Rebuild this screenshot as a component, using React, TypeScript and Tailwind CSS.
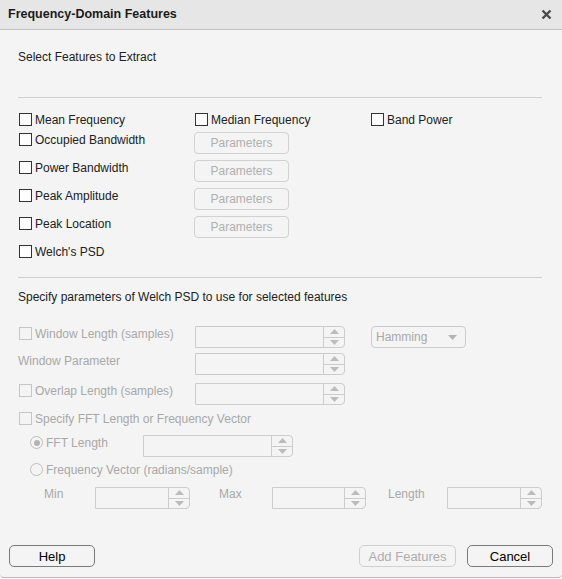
import React from "react";

//small square checkbox, dark when enabled, light grey when disabled
function Box({ disabled = false }: { disabled?: boolean }) {
  return (
    <span
      className={
        "mt-[1px] inline-block w-[13px] h-[13px] shrink-0 border " +
        (disabled ? "border-[#c6c6c6] bg-[#f4f4f4]" : "border-[#333333] bg-white")
      }
    />
  );
}

//checkbox + label
function Check({ label, disabled = false }: { label: string; disabled?: boolean }) {
  return (
    <div className="flex items-start gap-[3px] pl-[1px]">
      <Box disabled={disabled} />
      <span className={"pt-[1px] leading-[15px] whitespace-nowrap " + (disabled ? "text-[#a8a8a8]" : "text-[#212121]")}>
        {label}
      </span>
    </div>
  );
}

//radio button + label (always disabled here)
function Radio({ label, on = false }: { label: string; on?: boolean }) {
  return (
    <div className="flex items-start gap-[3px]">
      <span className="mt-[1px] flex items-center justify-center w-[13px] h-[13px] rounded-full border border-[#bdbdbd] bg-[#f4f4f4]">
        {on && <span className="w-[6px] h-[6px] rounded-full bg-[#b3b3b3]" />}
      </span>
      <span className="pt-[1px] leading-[15px] whitespace-nowrap text-[#a8a8a8]">{label}</span>
    </div>
  );
}

//disabled "Parameters" button
function ParamsBtn() {
  return (
    <div className="w-[95px] h-[22px] flex items-center justify-center rounded-[4px] border border-[#d2d2d2] text-[#b0b0b0]">
      Parameters
    </div>
  );
}

//disabled numeric spinner with up/down arrows
function Spinner({ w }: { w: string }) {
  return (
    <div className={"flex h-[22px] border border-[#cccccc] rounded-r-[4px] bg-[#f4f4f4] " + w}>
      <div className="flex-1" />
      <div className="w-[21px] flex flex-col border-l border-[#cccccc]">
        <div className="flex-1 flex items-center justify-center border-b border-[#cccccc]">
          <svg width="9" height="5" viewBox="0 0 9 5">
            <path d="M0 5 L4.5 0 L9 5 Z" fill="#bcbcbc" />
          </svg>
        </div>
        <div className="flex-1 flex items-center justify-center">
          <svg width="9" height="5" viewBox="0 0 9 5">
            <path d="M0 0 L4.5 5 L9 0 Z" fill="#bcbcbc" />
          </svg>
        </div>
      </div>
    </div>
  );
}

export default function App() {
  return (
    <div className="w-[562px] h-[579px] bg-white font-['Liberation_Sans',Arial,sans-serif] text-[12px]">
      <div className="h-[578px] flex flex-col bg-[#f4f4f4] border-b border-[#b8b8b8] rounded-b-[4px] overflow-hidden">
        {/* title bar */}
        <div className="h-[30px] shrink-0 flex items-center justify-between pl-[8px] pr-[10px] bg-[#e6e6e6] border-b border-[#c4c4c4]">
          <span className="font-bold text-[12.5px] text-[#1b1b1b]">Frequency-Domain Features</span>
          <svg width="11" height="11" viewBox="0 0 11 11">
            <path d="M1.5 1.5 L9.5 9.5 M9.5 1.5 L1.5 9.5" stroke="#4a4a4a" strokeWidth="2.4" />
          </svg>
        </div>

        {/* body */}
        <div className="flex-1 flex flex-col pl-[18px] pr-[20px]">
          <div className="mt-[20px] leading-[15px] text-[#212121]">Select Features to Extract</div>
          <div className="mt-[32px] border-t border-[#d0d0d0]" />

          {/* feature checkboxes */}
          <div className="mt-[14px] flex flex-col">
            <div className="h-[20px] flex">
              <div className="w-[176px]"><Check label="Mean Frequency" /></div>
              <div className="w-[176px]"><Check label="Median Frequency" /></div>
              <div><Check label="Band Power" /></div>
            </div>
            {["Occupied Bandwidth", "Power Bandwidth", "Peak Amplitude", "Peak Location"].map((l) => (
              <div key={l} className="h-[28px] flex">
                <div className="w-[176px]"><Check label={l} /></div>
                <ParamsBtn />
              </div>
            ))}
            <div className="h-[16px] flex">
              <Check label="Welch's PSD" />
            </div>
          </div>

          <div className="mt-[17px] border-t border-[#d0d0d0]" />
          <div className="mt-[12px] leading-[15px] text-[#212121]">
            Specify parameters of Welch PSD to use for selected features
          </div>

          {/* welch psd parameters */}
          <div className="mt-[21px] flex flex-col">
            <div className="h-[27px] flex items-start">
              <div className="w-[177px]"><Check label="Window Length (samples)" disabled /></div>
              <Spinner w="w-[150px]" />
              <div className="ml-[26px] w-[95px] h-[22px] flex items-center justify-between pl-[4px] pr-[8px] rounded-[4px] border border-[#cccccc] text-[#a8a8a8]">
                <span>Hamming</span>
                <svg width="9" height="5" viewBox="0 0 9 5">
                  <path d="M0 0 L4.5 5 L9 0 Z" fill="#b3b3b3" />
                </svg>
              </div>
            </div>
            <div className="h-[30px] flex items-start">
              <div className="w-[177px] leading-[15px] pt-[1px] text-[#a8a8a8]">Window Parameter</div>
              <Spinner w="w-[150px]" />
            </div>
            <div className="h-[28px] flex items-start">
              <div className="w-[177px]"><Check label="Overlap Length (samples)" disabled /></div>
              <Spinner w="w-[150px]" />
            </div>
            <div className="h-[24px] flex items-start">
              <Check label="Specify FFT Length or Frequency Vector" disabled />
            </div>
            <div className="h-[27px] flex items-start pl-[12px]">
              <div className="w-[113px]"><Radio label="FFT Length" on /></div>
              <Spinner w="w-[150px]" />
            </div>
            <div className="h-[25px] flex items-start pl-[12px]">
              <Radio label="Frequency Vector (radians/sample)" />
            </div>
            <div className="h-[22px] flex items-start text-[#a8a8a8]">
              <div className="w-[77px] pl-[26px] leading-[15px]">Min</div>
              <Spinner w="w-[95px]" />
              <div className="w-[82px] pl-[29px] leading-[15px]">Max</div>
              <Spinner w="w-[94px]" />
              <div className="w-[81px] pl-[22px] leading-[15px]">Length</div>
              <Spinner w="w-[95px]" />
            </div>
          </div>
        </div>

        {/* footer buttons */}
        <div className="h-[22px] mb-[10px] flex justify-between px-[9px] text-[13px]">
          <button className="w-[86px] h-[22px] rounded-[5px] border border-[#7a7a7a] bg-[#f4f4f4] text-black leading-none">
            Help
          </button>
          <div className="flex gap-[11px]">
            <button className="w-[97px] h-[22px] rounded-[5px] border border-[#d0d0d0] bg-[#f4f4f4] text-[#adadad] leading-none">
              Add Features
            </button>
            <button className="w-[86px] h-[22px] rounded-[5px] border border-[#7a7a7a] bg-[#f4f4f4] text-black leading-none">
              Cancel
            </button>
          </div>
        </div>
      </div>
    </div>
  );
}
